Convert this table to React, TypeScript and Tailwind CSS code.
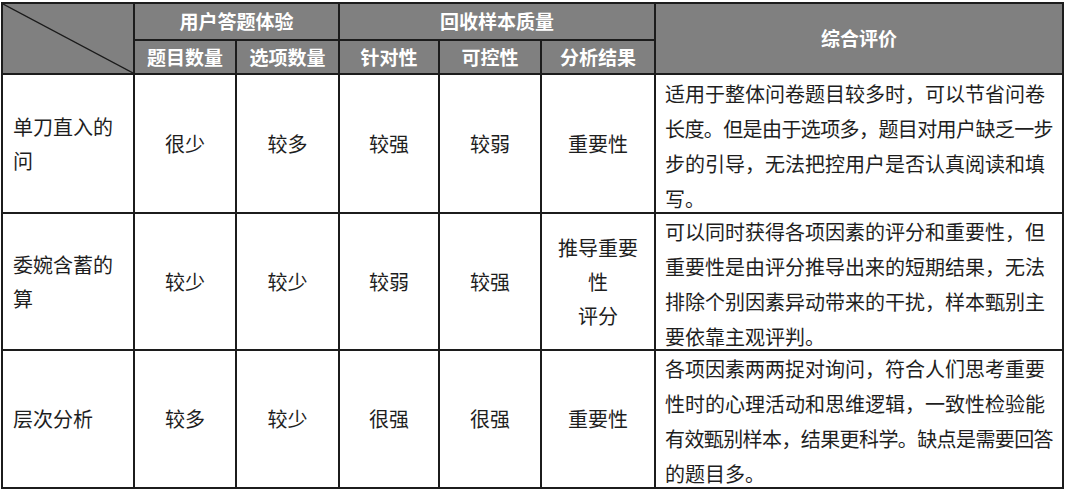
import React from "react";

interface Row {
  name: string[];
  count: string;
  options: string;
  target: string;
  control: string;
  result: string[];
  lines: { t: string; tight?: boolean }[];
}

const rows: Row[] = [
  {
    name: ["单刀直入的", "问"],
    count: "很少",
    options: "较多",
    target: "较强",
    control: "较弱",
    result: ["重要性"],
    lines: [
      { t: "适用于整体问卷题目较多时，可以节省问卷" },
      { t: "长度。但是由于选项多，题目对用户缺乏一步", tight: true },
      { t: "步的引导，无法把控用户是否认真阅读和填" },
      { t: "写。" },
    ],
  },
  {
    name: ["委婉含蓄的", "算"],
    count: "较少",
    options: "较少",
    target: "较弱",
    control: "较强",
    result: ["推导重要", "性", "评分"],
    lines: [
      { t: "可以同时获得各项因素的评分和重要性，但" },
      { t: "重要性是由评分推导出来的短期结果，无法" },
      { t: "排除个别因素异动带来的干扰，样本甄别主" },
      { t: "要依靠主观评判。" },
    ],
  },
  {
    name: ["层次分析"],
    count: "较多",
    options: "较少",
    target: "很强",
    control: "很强",
    result: ["重要性"],
    lines: [
      { t: "各项因素两两捉对询问，符合人们思考重要" },
      { t: "性时的心理活动和思维逻辑，一致性检验能" },
      { t: "有效甄别样本，结果更科学。缺点是需要回答", tight: true },
      { t: "的题目多。" },
    ],
  },
];

const head = "bg-[#808080] text-white font-bold text-[19px] flex items-center justify-center";
const cell = "bg-white flex items-center justify-center text-[20px] leading-[34px] text-center";

export default function App() {
  return (
    <div
      className="min-h-screen bg-white pl-px pt-[2px] text-[#1e1e1e]"
      style={{ fontFamily: '"Noto Sans CJK SC", "Noto Sans", sans-serif' }}
    >
      <div className="grid w-[1063px] h-[487px] grid-cols-[130px_100px_101px_98px_100px_112px_406px] grid-rows-[35px_32px_137px_135px_136px] gap-[2px] bg-[#1c1c1c] p-[2px]">
        <div className="relative row-span-2 bg-[#808080]">
          <svg className="absolute inset-0 h-full w-full" viewBox="0 0 100 100" preserveAspectRatio="none">
            <line x1="0" y1="0" x2="100" y2="100" stroke="#1a1a1a" strokeWidth="1.3" vectorEffect="non-scaling-stroke" />
          </svg>
        </div>
        <div className={`${head} col-span-2`}>用户答题体验</div>
        <div className={`${head} col-span-3`}>回收样本质量</div>
        <div className={`${head} row-span-2`}>综合评价</div>
        <div className={head}>题目数量</div>
        <div className={head}>选项数量</div>
        <div className={head}>针对性</div>
        <div className={head}>可控性</div>
        <div className={head}>分析结果</div>

        {rows.map((r) => (
          <React.Fragment key={r.name.join("")}>
            <div className="bg-white flex flex-col justify-center pl-[10px] text-[20px] leading-[34px]">
              {r.name.map((n) => (
                <span key={n}>{n}</span>
              ))}
            </div>
            <div className={cell}>{r.count}</div>
            <div className={cell}>{r.options}</div>
            <div className={cell}>{r.target}</div>
            <div className={cell}>{r.control}</div>
            <div className={`${cell} flex-col`}>
              {r.result.map((n) => (
                <span key={n}>{n}</span>
              ))}
            </div>
            <div className="bg-white flex flex-col justify-center pl-[9px] pt-[4px] text-[20px] leading-[35px] overflow-hidden">
              {r.lines.map((l) => (
                <span key={l.t} className={l.tight ? "whitespace-nowrap tracking-[-0.6px]" : "whitespace-nowrap"}>
                  {l.t}
                </span>
              ))}
            </div>
          </React.Fragment>
        ))}
      </div>
    </div>
  );
}
